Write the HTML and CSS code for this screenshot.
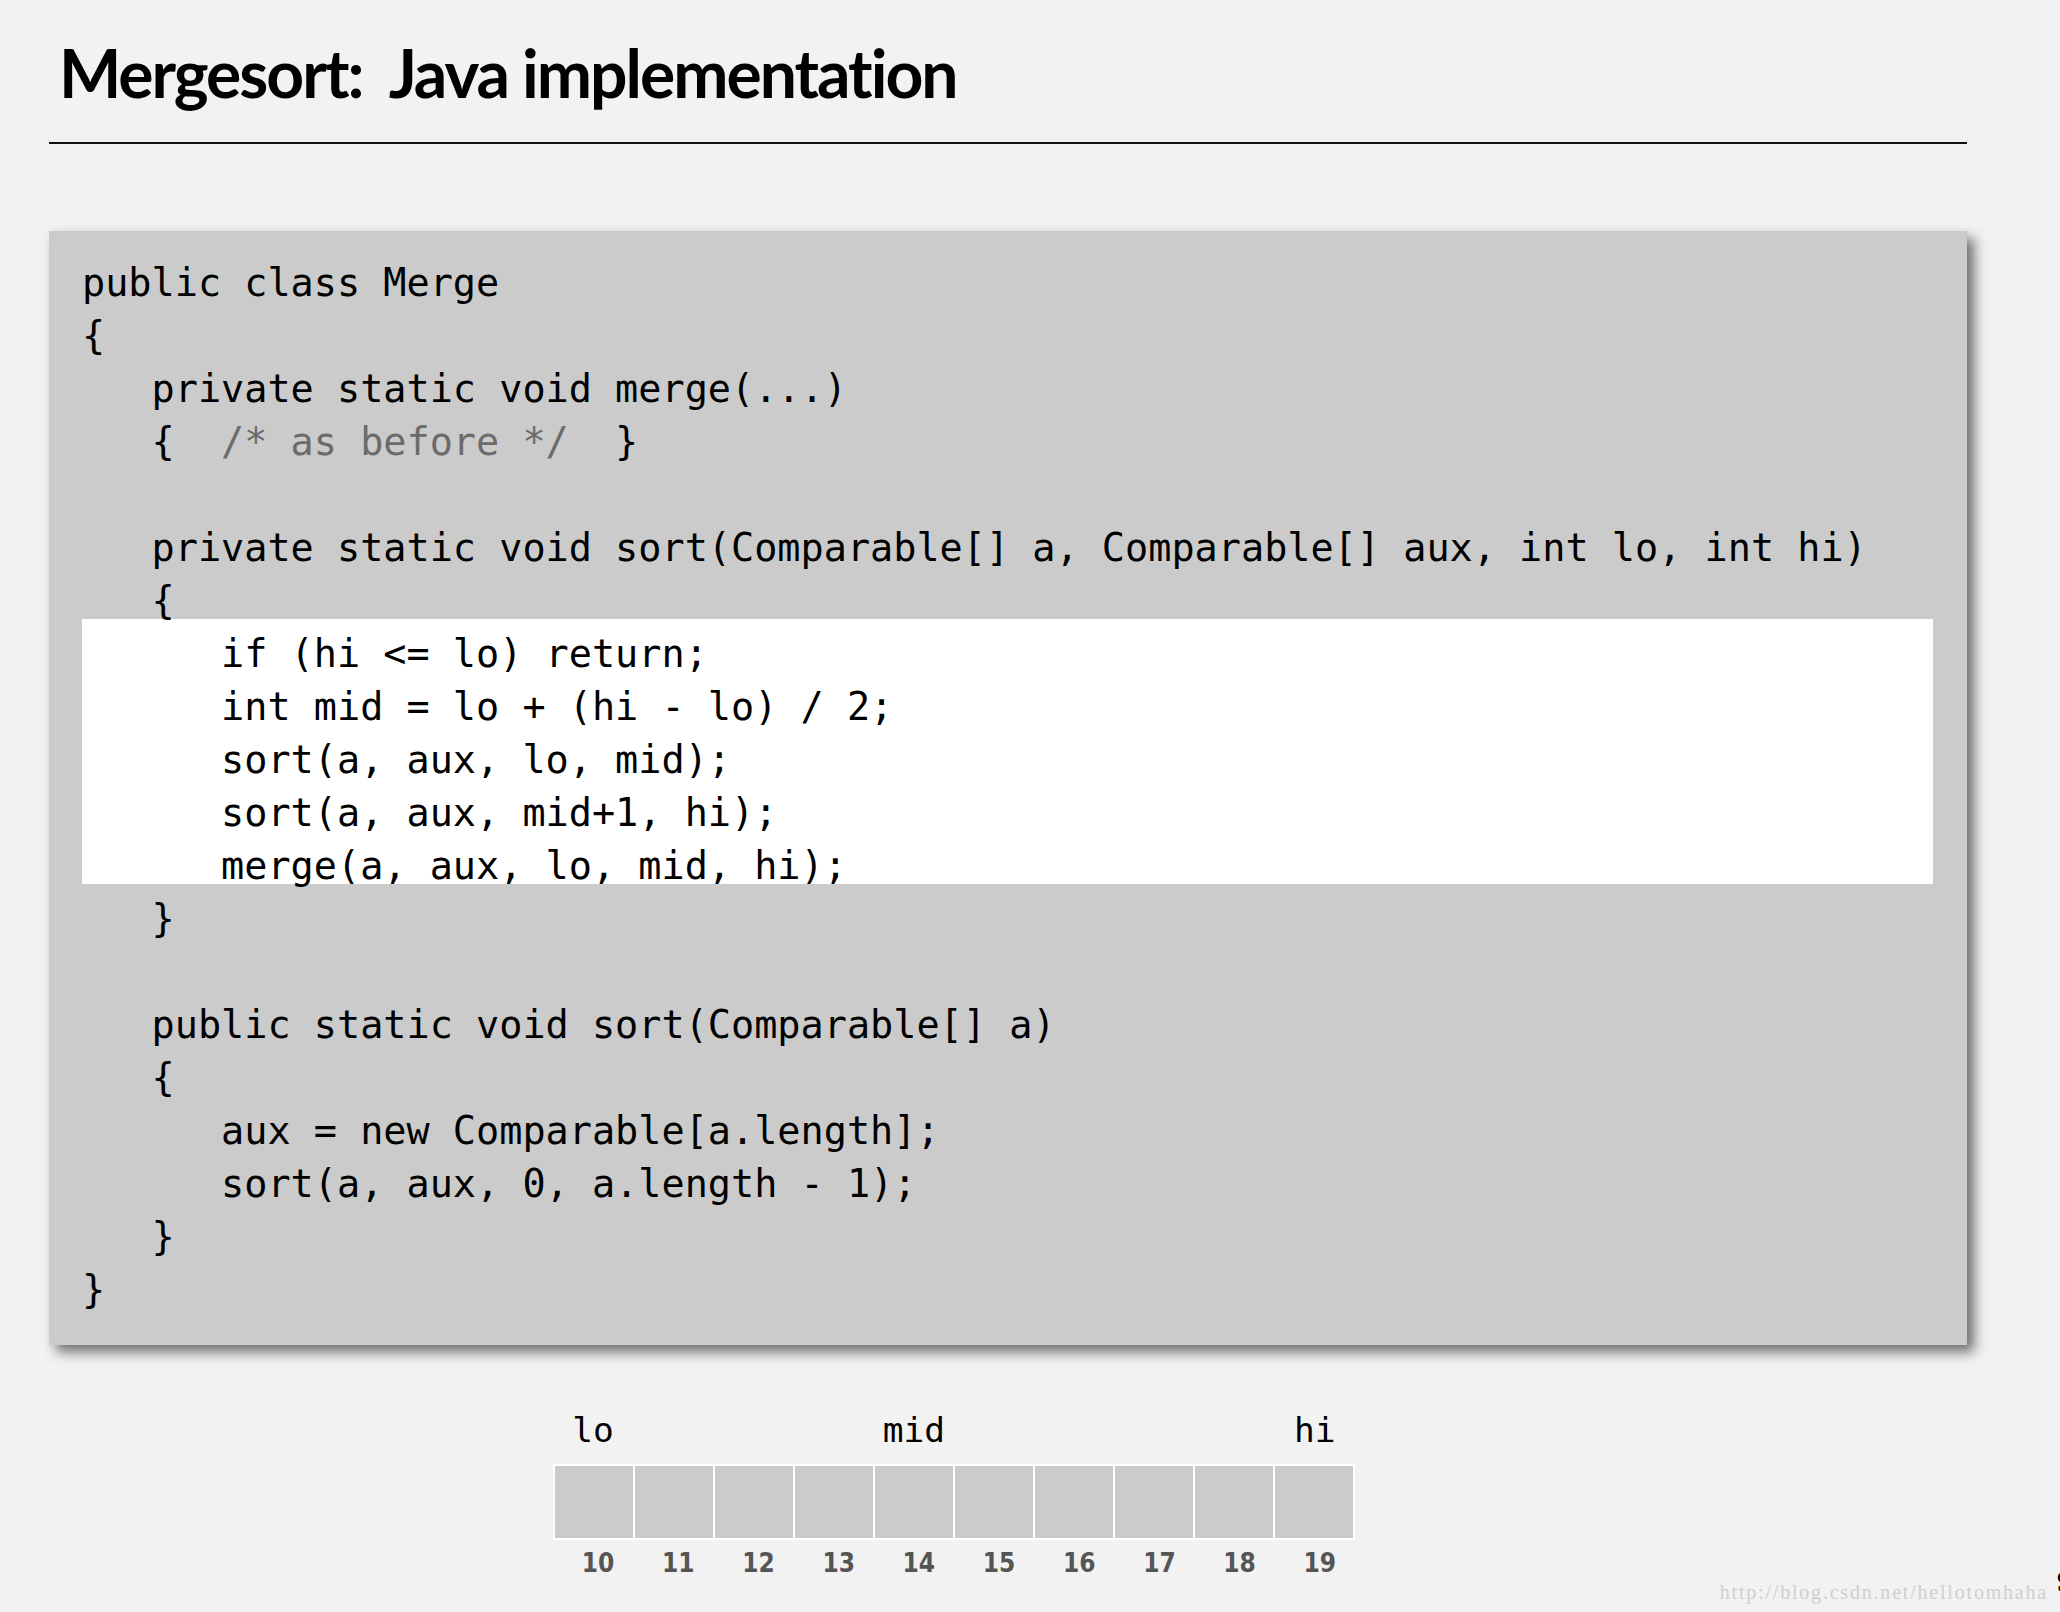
FILE: index.html
```html
<!DOCTYPE html>
<html lang="en">
<head>
    <meta charset="UTF-8">
    <title>Mergesort: Java implementation</title>
    <link rel="stylesheet" href="styles.css">
</head>
<body>

<div class="slide">
    <div class="slide-header">
        <h1 class="slide-title">Mergesort:&nbsp; Java implementation</h1>
    </div>

    <div class="code-box">
        <div class="line">public class Merge</div>
        <div class="line">{</div>
        <div class="line">   private static void merge(...)</div>
        <div class="line">   {  <span class="comment">/* as before */</span>  }</div>
        <div class="line"></div>
        <div class="line">   private static void sort(Comparable[] a, Comparable[] aux, int lo, int hi)</div>
        <div class="line">   {</div>
        <div class="highlight">
            <div class="line">      if (hi &lt;= lo) return;</div>
            <div class="line">      int mid = lo + (hi - lo) / 2;</div>
            <div class="line">      sort(a, aux, lo, mid);</div>
            <div class="line">      sort(a, aux, mid+1, hi);</div>
            <div class="line">      merge(a, aux, lo, mid, hi);</div>
        </div>
        <div class="line">   }</div>
        <div class="line"></div>
        <div class="line">   public static void sort(Comparable[] a)</div>
        <div class="line">   {</div>
        <div class="line">      aux = new Comparable[a.length];</div>
        <div class="line">      sort(a, aux, 0, a.length - 1);</div>
        <div class="line">   }</div>
        <div class="line">}</div>
    </div>

    <div class="array-diagram">
        <div class="pointer-row">
            <span class="pointer">lo</span>
            <span></span><span></span><span></span>
            <span class="pointer">mid</span>
            <span></span><span></span><span></span><span></span>
            <span class="pointer">hi</span>
        </div>
        <div class="cells">
            <div class="cell"></div><div class="cell"></div><div class="cell"></div><div class="cell"></div><div class="cell"></div>
            <div class="cell"></div><div class="cell"></div><div class="cell"></div><div class="cell"></div><div class="cell"></div>
        </div>
        <div class="index-row">
            <span>10</span><span>11</span><span>12</span><span>13</span><span>14</span>
            <span>15</span><span>16</span><span>17</span><span>18</span><span>19</span>
        </div>
    </div>
</div>

<div class="watermark">http://blog.csdn.net/hellotomhaha</div>
<div class="page-number">9</div>

</body>
</html>
```

FILE: styles.css
```css
html, body {
    margin: 0;
    padding: 0;
}
body {
    width: 2060px;
    height: 1612px;
    overflow: hidden;
    position: relative;
    background-color: #f2f2f2;
    color: #000;
}
.slide {
    margin-left: 49px;
    width: 1918px;
}
.slide-header {
    padding: 39px 0 35px 10px;
    border-bottom: 2px solid #111;
}
.slide-title {
    margin: 0;
    font-family: 'Lato', 'Liberation Sans', sans-serif;
    font-weight: 700;
    font-size: 66px;
    line-height: 68px;
    letter-spacing: -2px;
    white-space: nowrap;
}
.code-box {
    margin-top: 87px;
    background-color: #cbcbcb;
    padding: 17px 34px 37px 33px;
    box-shadow: 7px 7px 12px rgba(0, 0, 0, 0.55);
    font-family: 'DejaVu Sans Mono', monospace;
    font-size: 38.5px;
}
.line {
    height: 53px;
    line-height: 69px;
    white-space: pre;
}
.highlight {
    background-color: #fff;
}
.comment {
    color: #6b6b6b;
}
.array-diagram {
    margin-left: 504px;
    margin-top: 65px;
    width: 802px;
}
.pointer-row, .index-row {
    display: grid;
    grid-template-columns: repeat(10, 80.2px);
    text-align: center;
}
.pointer-row {
    font-family: 'DejaVu Sans Mono', monospace;
    font-size: 34.5px;
    line-height: 40px;
    height: 40px;
}
.cells {
    margin-top: 14px;
    display: flex;
    gap: 2px;
    padding: 2px;
    background-color: #fff;
}
.cell {
    flex: 1;
    height: 72px;
    background-color: #cbcbcb;
}
.index-row {
    margin-top: 8px;
    padding-left: 5px;
    font-family: 'DejaVu Sans Condensed', 'DejaVu Sans', sans-serif;
    font-weight: bold;
    font-size: 26px;
    line-height: 30px;
    color: #555;
}
.watermark {
    position: absolute;
    top: 1582px;
    right: 12px;
    font-family: 'Liberation Serif', serif;
    font-size: 20px;
    line-height: 20px;
    letter-spacing: 1.8px;
    color: #cfcfcf;
}
.page-number {
    position: absolute;
    top: 1566px;
    left: 2057px;
    font-family: 'Liberation Serif', serif;
    font-weight: bold;
    font-size: 30px;
    line-height: 30px;
}
```
